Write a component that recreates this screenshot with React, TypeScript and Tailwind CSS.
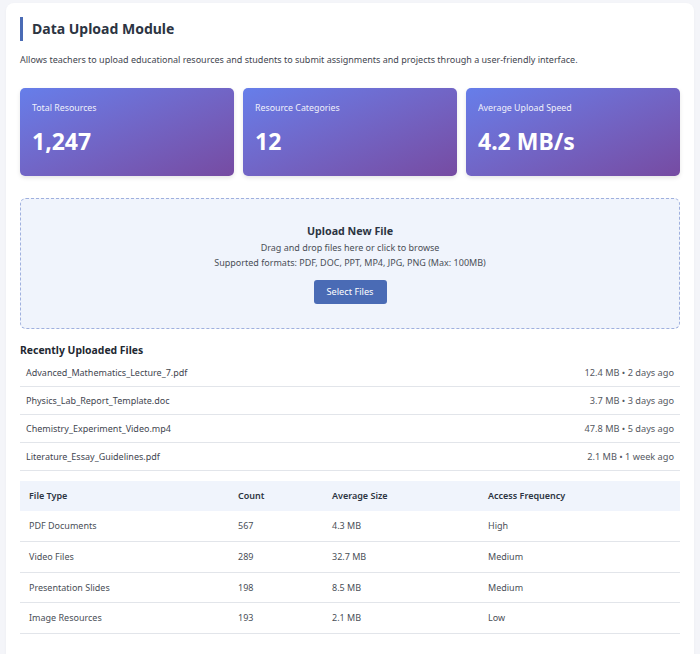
const stats = [
  { label: 'Total Resources', value: '1,247' },
  { label: 'Resource Categories', value: '12' },
  { label: 'Average Upload Speed', value: '4.2 MB/s' },
];

const recentFiles = [
  { name: 'Advanced_Mathematics_Lecture_7.pdf', meta: '12.4 MB • 2 days ago' },
  { name: 'Physics_Lab_Report_Template.doc', meta: '3.7 MB • 3 days ago' },
  { name: 'Chemistry_Experiment_Video.mp4', meta: '47.8 MB • 5 days ago' },
  { name: 'Literature_Essay_Guidelines.pdf', meta: '2.1 MB • 1 week ago' },
];

const fileTypes = [
  { type: 'PDF Documents', count: '567', size: '4.3 MB', freq: 'High' },
  { type: 'Video Files', count: '289', size: '32.7 MB', freq: 'Medium' },
  { type: 'Presentation Slides', count: '198', size: '8.5 MB', freq: 'Medium' },
  { type: 'Image Resources', count: '193', size: '2.1 MB', freq: 'Low' },
];

export default function App() {
  return (
    <div
      className="min-h-[654px] bg-[#f4f5f9] px-[6px] pt-[3px]"
      style={{ fontFamily: '"Segoe UI", "Noto Sans", sans-serif' }}
    >
      <div className="rounded-[8px] bg-white px-[14px] pb-[40px] pt-[14px] shadow-[0_1px_3px_rgba(0,0,0,0.04)]">
        <div className="flex items-center border-l-[3px] border-[#4a6bb5] py-[2px] pl-[9px]">
          <h1 className="text-[14px] font-bold leading-[20px] text-[#2c3442]">Data Upload Module</h1>
        </div>

        <p className="mt-[12px] text-[9px] leading-[14px] text-[#3f4650]">
          Allows teachers to upload educational resources and students to submit assignments and projects through a user-friendly interface.
        </p>

        <div className="mt-[21px] grid grid-cols-3 gap-[9px]">
          {stats.map((s) => (
            <div
              key={s.label}
              className="h-[88px] rounded-[5px] bg-gradient-to-br from-[#667eea] to-[#764ba2] px-[12px] pt-[13px] text-white shadow-[0_2px_4px_rgba(0,0,0,0.1)]"
            >
              <p className="text-[8.8px] leading-[14px] opacity-90">{s.label}</p>
              <p className="mt-[11px] text-[23px] font-bold leading-[30px]">{s.value}</p>
            </div>
          ))}
        </div>

        <div className="mt-[22px] flex h-[131px] flex-col items-center justify-center rounded-[6px] border border-dashed border-[#9fb0de] bg-[#f0f4fc] text-center">
          <p className="text-[10.7px] font-bold leading-[15px] text-[#2c3442]">Upload New File</p>
          <p className="mt-[2px] text-[9px] leading-[14px] text-[#4a4f57]">Drag and drop files here or click to browse</p>
          <p className="mt-[1px] text-[9px] leading-[14px] text-[#4a4f57]">Supported formats: PDF, DOC, PPT, MP4, JPG, PNG (Max: 100MB)</p>
          <button
            type="button"
            className="mt-[10px] h-[24px] rounded-[3px] bg-[#4a6bb5] px-[13px] text-[9.2px] text-white"
          >
            Select Files
          </button>
        </div>

        <h2 className="mt-[14px] text-[10.4px] font-bold leading-[15px] text-[#222831]">Recently Uploaded Files</h2>
        <div className="mt-[1px]">
          {recentFiles.map((f) => (
            <div
              key={f.name}
              className="flex h-[28px] items-center justify-between border-b border-[#e2e5ea] px-[6px] text-[9px] text-[#3f4650]"
            >
              <span>{f.name}</span>
              <span className="text-[9.2px] text-[#55595f]">{f.meta}</span>
            </div>
          ))}
        </div>

        <table className="mt-[10px] w-full border-collapse text-left text-[9px]">
          <thead>
            <tr className="h-[30px] bg-[#f0f4fc] text-[#2c3442]">
              <th className="w-[209px] pl-[9px] font-semibold">File Type</th>
              <th className="w-[94px] pl-[9px] font-semibold">Count</th>
              <th className="w-[156px] pl-[9px] font-semibold">Average Size</th>
              <th className="pl-[9px] font-semibold">Access Frequency</th>
            </tr>
          </thead>
          <tbody className="text-[#4a4f57]">
            {fileTypes.map((r) => (
              <tr key={r.type} className="h-[30.5px] border-b border-[#e2e5ea]">
                <td className="pl-[9px]">{r.type}</td>
                <td className="pl-[9px]">{r.count}</td>
                <td className="pl-[9px]">{r.size}</td>
                <td className="pl-[9px]">{r.freq}</td>
              </tr>
            ))}
          </tbody>
        </table>
      </div>
    </div>
  );
}
